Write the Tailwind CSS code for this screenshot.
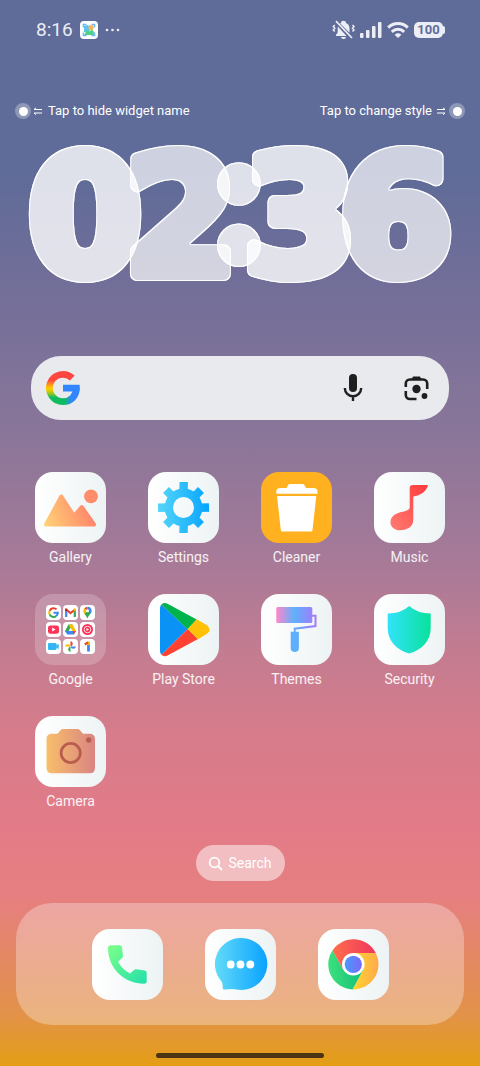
<!DOCTYPE html>
<html lang="en">
<head>
    <meta charset="UTF-8">
    <meta name="viewport" content="width=device-width, initial-scale=1.0">
    <title>Home screen</title>
    <!-- TailwindCSS -->
    <script src="https://cdn.jsdelivr.net/npm/@tailwindcss/browser@4"></script>
</head>
<body class="min-h-screen flex flex-col font-['Roboto',sans-serif] text-white bg-[linear-gradient(to_bottom,#5f6b98_0%,#5f6b98_16%,#746f99_28%,#8a7699_41%,#a87a98_53%,#c67c90_62%,#d77c8b_69%,#e27b88_77%,#e67f80_84%,#e38862_90%,#e3924b_95%,#e49e14_100%)]">

    <!-- Status bar -->
    <header class="flex items-center justify-between h-[60px] pl-9 pr-[35px] text-[#eceef6]">
        <div class="flex items-center gap-[7px]">
            <span class="text-[19px]">8:16</span>
            <svg class="size-[18px]" viewBox="0 0 18 18">
                <rect width="18" height="18" rx="4" fill="#fff"/>
                <path d="M3.500 6.500v-3h3M11.500 3.500h3v3M14.500 11.500v3h-3M6.500 14.500h-3v-3" fill="none" stroke="#6fb6f5" stroke-width="1.600"/>
                <path d="M4 5l4-1 3 3-2 4-5 0z" fill="#5cc4f2"/>
                <circle cx="11" cy="6.500" r="2.600" fill="#f6b45c"/>
                <path d="M4.500 14l2-5 3 1.500 2.500-2 2 2.500-.5 3z" fill="#4fd283"/>
            </svg>
            <svg class="w-4 h-[18px]" viewBox="0 0 16 18" fill="currentColor"><circle cx="2" cy="9" r="1.300"/><circle cx="7.500" cy="9" r="1.300"/><circle cx="13" cy="9" r="1.300"/></svg>
        </div>
        <div class="flex items-center gap-[5px]">
            <!-- Muted bell -->
            <svg class="w-[23px] h-5" viewBox="0 0 23 20" fill="currentColor">
                <path d="M8 3.300 9 3V2.500a2.500 1.800 0 0 1 5 0v.5c2.600.9 3.500 3 3.500 5.500v4.200z"/>
                <path d="M5.800 6.600 14.600 16H4v-1.200l1.500-1.700c.4-2 .1-4.500.3-6.500z"/>
                <path d="M9 17h5a2.500 2 0 0 1-5 0z"/>
                <path d="M4 1.200 20 18" stroke="currentColor" stroke-width="1.700"/>
                <path d="M2.800 5 1.300 6.500l1.500 1.800L1.300 10l1.500 1.500M20.500 5 22 6.500l-1.500 1.800L22 10l-1.500 1.500" fill="none" stroke="currentColor" stroke-width="1.500"/>
            </svg>
            <!-- Signal -->
            <svg class="w-[22px] h-4" viewBox="0 0 22 16" fill="currentColor">
                <rect x="0" y="11" width="3.500" height="5" rx="1"/><rect x="6" y="8" width="3.500" height="8" rx="1"/><rect x="12" y="4" width="3.500" height="12" rx="1"/><rect x="18" y="0" width="3.500" height="16" rx="1"/>
            </svg>
            <!-- Wi-Fi -->
            <svg class="w-[22px] h-4" viewBox="0 0 22 16" fill="none" stroke="currentColor" stroke-width="3">
                <path d="M1.200 5.600a14 14 0 0 1 19.600 0M4.800 9.800a9 9 0 0 1 12.400 0"/>
                <path d="M11 16 7.600 12.700a5.200 5.200 0 0 1 6.800 0z" fill="currentColor" stroke="none"/>
            </svg>
            <!-- Battery -->
            <div class="flex items-center">
                <span class="rounded-[5px] bg-[#eceef6] w-[29px] h-4 text-center text-[13px] leading-4 font-bold text-[#5f6b98]">100</span>
                <span class="w-0.5 h-2 rounded-r bg-[#eceef6]"></span>
            </div>
        </div>
    </header>

    <main class="flex flex-col grow">
        <!-- Widget hints -->
        <div class="flex justify-between mt-[41px] px-[15px] text-[13px] leading-5">
            <button class="flex items-center gap-[3px]">
                <span class="size-4 rounded-full bg-white/30 flex items-center justify-center"><span class="size-[9px] rounded-full bg-white"></span></span>
                <svg class="w-[9px] h-2 mr-[2px]" viewBox="0 0 9 8" fill="none" stroke="currentColor"><path d="M0 2.500h8M0 6h8M2 .8 0 2.500M2 7.700 0 6"/></svg>
                <span>Tap to hide widget name</span>
            </button>
            <button class="flex items-center gap-[3px]">
                <span>Tap to change style</span>
                <svg class="w-[9px] h-2 ml-[2px]" viewBox="0 0 9 8" fill="none" stroke="currentColor"><path d="M0 2.500h8M0 6h8M6 .8l2 1.700M6 7.700 8 6"/></svg>
                <span class="size-4 rounded-full bg-white/30 flex items-center justify-center"><span class="size-[9px] rounded-full bg-white"></span></span>
            </button>
        </div>

        <!-- Clock widget -->
        <svg class="w-full overflow-visible" viewBox="0 121 480 200" role="img" aria-label="02:36">
            <defs>
                <filter id="glass" x="-20%" y="-20%" width="140%" height="140%" color-interpolation-filters="sRGB">
                    <feMorphology in="SourceAlpha" operator="erode" radius="1" result="inner"/>
                    <feComposite in="SourceGraphic" in2="inner" operator="out" result="rim"/>
                    <feComponentTransfer in="SourceGraphic" result="body"><feFuncA type="linear" slope="0.800"/></feComponentTransfer>
                    <feMerge><feMergeNode in="body"/><feMergeNode in="rim"/></feMerge>
                </filter>
                <filter id="glassDim" x="-20%" y="-20%" width="140%" height="140%" color-interpolation-filters="sRGB">
                    <feMorphology in="SourceAlpha" operator="erode" radius="1" result="inner"/>
                    <feComposite in="SourceGraphic" in2="inner" operator="out" result="rim"/>
                    <feComponentTransfer in="SourceGraphic" result="body"><feFuncA type="linear" slope="0.700"/></feComponentTransfer>
                    <feMerge><feMergeNode in="body"/><feMergeNode in="rim"/></feMerge>
                </filter>
            </defs>
            <g font-family="DejaVu Sans, sans-serif" font-weight="700" font-size="164" text-anchor="middle" fill="#fff" stroke="#fff" stroke-width="14" stroke-linejoin="round">
                <text x="85" y="274" filter="url(#glass)">0</text>
                <text x="181" y="274" filter="url(#glassDim)">2</text>
                <text x="300" y="274" filter="url(#glass)">3</text>
                <text x="396" y="274" filter="url(#glassDim)">6</text>
                <text x="239" y="257" font-family="Inter, sans-serif" font-weight="600" stroke-width="18" filter="url(#glass)">:</text>
            </g>
        </svg>

        <!-- Google search bar -->
        <form class="flex items-center mt-[35px] mx-[31px] h-16 rounded-[30px] bg-[#e9eaee] pl-[14px] pr-[19px]">
            <svg class="size-9 shrink-0" viewBox="0 0 36 36" fill="none" stroke-width="6.800">
                <defs>
                    <linearGradient id="gLeft" x1="0" y1="0" x2="0" y2="1"><stop offset=".2" stop-color="#ff4641"/><stop offset=".5" stop-color="#ffcc00"/><stop offset=".62" stop-color="#d8cb00"/><stop offset=".85" stop-color="#0ebc5f"/></linearGradient>
                    <linearGradient id="gRight" x1="0" y1="0" x2="1" y2="0"><stop offset=".1" stop-color="#0ebc5f"/><stop offset=".65" stop-color="#3186ff"/></linearGradient>
                </defs>
                <path d="M27.300 8.100A13.600 13.600 0 1 0 18.500 31.600" stroke="url(#gLeft)"/>
                <path d="M18 31.600c8 0 13.300-5.600 13.300-13.600" stroke="url(#gRight)"/>
                <path d="M18 14.800h16.600c.3 2.300.2 4.600-.4 6.600H18z" fill="#3186ff"/>
            </svg>
            <input type="search" aria-label="Search Google" class="grow min-w-0 bg-transparent text-[#1f1f1f] outline-none">
            <button type="button" aria-label="Voice search" class="mr-10">
                <svg class="w-5 h-7" viewBox="0 0 20 28" fill="#1f1f1f">
                    <rect x="6" y="0" width="8" height="18" rx="4"/>
                    <path d="M1.800 14a8.200 8.200 0 0 0 16.400 0M10 22v5" fill="none" stroke="#1f1f1f" stroke-width="2.400"/>
                </svg>
            </button>
            <button type="button" aria-label="Search with camera">
                <svg class="w-[27px] h-[26px]" viewBox="0 0 27 26" fill="none" stroke="#1f1f1f" stroke-width="2.600">
                    <path d="M2.800 12V8.500a4 4 0 0 1 4-4h13.400a4 4 0 0 1 4 4V14M2.800 16v4a4 4 0 0 0 4 4h6.700"/>
                    <path d="M8.500 4.500 10 1.500h7l1.500 3z" fill="#1f1f1f" stroke="none"/>
                    <circle cx="13.500" cy="14" r="4.200" fill="#1f1f1f" stroke="none"/>
                    <circle cx="21.500" cy="21" r="2.900" fill="#1f1f1f" stroke="none"/>
                </svg>
            </button>
        </form>

        <!-- Apps -->
        <section class="grid grid-cols-4 gap-y-[27px] mt-[52px] px-[14px] text-sm text-white/90 text-shadow-sm">
            <button class="flex flex-col items-center gap-1">
                <svg class="size-[71px] rounded-[18px] bg-linear-to-r from-white to-[#edf3f4]" viewBox="0 0 71 71">
                    <defs><linearGradient id="gallery" gradientUnits="userSpaceOnUse" x1="9" y1="54" x2="60" y2="34"><stop stop-color="#ffd576"/><stop offset=".85" stop-color="#ff8a6b"/></linearGradient></defs>
                    <path d="M11 52.500 26.300 24.500 39 44 46.700 35 59 52.500z" fill="url(#gallery)" stroke="url(#gallery)" stroke-width="4" stroke-linejoin="round"/>
                    <circle cx="56" cy="24.300" r="6.900" fill="#ff8c6a"/>
                </svg>
                <span>Gallery</span>
            </button>
            <button class="flex flex-col items-center gap-1">
                <svg class="size-[71px] rounded-[18px] bg-linear-to-r from-white to-[#edf3f4]" viewBox="0 0 71 71">
                    <defs><linearGradient id="gear" gradientUnits="userSpaceOnUse" x1="10" y1="0" x2="61" y2="0"><stop stop-color="#55d6f8"/><stop offset="1" stop-color="#06a4ff"/></linearGradient></defs>
                    <g fill="none" stroke="url(#gear)">
                        <circle cx="35.500" cy="35.500" r="14.700" stroke-width="8.400"/>
                        <path d="M35.700 10 35.500 20M35.700 51 35.500 61M10 35.700 20 35.500M51 35.700 61 35.500M18 18l7 7M53 18l-7 7M18 53l7-7M53 53l-7-7" stroke-width="8.400"/>
                    </g>
                </svg>
                <span>Settings</span>
            </button>
            <button class="flex flex-col items-center gap-1">
                <svg class="size-[71px] rounded-[18px] bg-[#ffb120]" viewBox="0 0 71 71" fill="#fff">
                    <path d="M15.300 21.700v-2.200q0-3.500 4-3.500h6.200l1.500-2.700q.7-1.300 2-1.300h12.500q1.300 0 2 1.300l1.500 2.700h7.500q4 0 4 3.500v2.200z"/>
                    <path d="M16 24h39.300L51.500 58q-.2 1.500-1.500 1.500H21.300q-1.300 0-1.500-1.500z"/>
                </svg>
                <span>Cleaner</span>
            </button>
            <button class="flex flex-col items-center gap-1">
                <svg class="size-[71px] rounded-[18px] bg-linear-to-r from-white to-[#edf3f4]" viewBox="0 0 71 71">
                    <defs><linearGradient id="note" x1="0" y1="1" x2="1" y2="0"><stop stop-color="#ff7c73"/><stop offset="1" stop-color="#ff3b3b"/></linearGradient></defs>
                    <path d="M35.700 16q0-3 3-3H53q1.500 0 .7 1.500C50.500 21 46 23.500 39.300 24.500V48C39.300 54 33.500 58.300 26.500 58.300 20.500 58.300 16.500 55 16.500 50.500c0-5.500 4-8.500 9-10 5-1.300 8-1 10.200-4.500z" fill="url(#note)"/>
                </svg>
                <span>Music</span>
            </button>
            <button class="flex flex-col items-center gap-1">
                <span class="grid grid-cols-3 gap-[2px] size-[71px] p-[11px] rounded-[18px] bg-white/20">
                    <svg class="size-[15px] rounded bg-white" viewBox="0 0 15 15" fill="none" stroke-width="2"><path d="M10.600 4.400A4.300 4.300 0 0 0 3.600 5.800" stroke="#ea4335"/><path d="M3.600 5.800a4.300 4.300 0 0 0 0 3.600" stroke="#fbbc05"/><path d="M3.600 9.400a4.300 4.300 0 0 0 6.600 1.600" stroke="#34a853"/><path d="M10.200 11a4.300 4.300 0 0 0 1.600-3.300H7.500" stroke="#4285f4"/></svg>
                    <svg class="size-[15px] rounded bg-white" viewBox="0 0 15 15" fill="none" stroke-width="2.200"><path d="M3.200 12V5" stroke="#4285f4"/><path d="M11.800 12V5" stroke="#34a853"/><path d="M3 4.500l4.500 3.700L12 4.500" stroke="#ea4335"/><path d="M11.800 6V3.600" stroke="#fbbc05"/><path d="M3.200 6V3.600" stroke="#c5221f"/></svg>
                    <svg class="size-[15px] rounded bg-white" viewBox="0 0 15 15"><path d="M7.500 13.500C6.800 10.500 3.500 9 3.500 5.800h4z" fill="#34a853"/><path d="M7.500 13.500c.7-3 4-4.500 4-7.700l-1.500-2L5 9.500c1.200 1.200 2 2 2.500 4z" fill="#34a853"/><path d="M3.500 5.800A4 4 0 0 1 5 2.700l2.500 3L4.600 9Q3.500 7.500 3.500 5.800z" fill="#fbbc05"/><path d="M4.500 3.300A4 4 0 0 1 7.500 1.800v4z" fill="#ea4335"/><path d="M7.500 1.800a4 4 0 0 1 4 4q0 1.400-1 2.800l-3-2.800z" fill="#4285f4"/><circle cx="7.500" cy="5.800" r="1.500" fill="#fff"/></svg>
                    <svg class="size-[15px] rounded bg-white" viewBox="0 0 15 15"><rect x="2" y="3.500" width="11" height="8.300" rx="2.300" fill="#ff3358"/><path d="M6.200 5.600v4l3.400-2z" fill="#fff"/></svg>
                    <svg class="size-[15px] rounded bg-white" viewBox="0 0 15 15"><path d="M5.500 2.500h4L7.500 6 4.500 12 2 9z" fill="#34a853"/><path d="M5.500 2.500h4L13 9H9z" fill="#fbbc05"/><path d="M2 9l2.300 3.500h6.500L13 9z" fill="#4285f4"/><path d="M10 9h3l-2.200 3.500z" fill="#ea4335"/><path d="M7.500 6 5.700 9h3.600z" fill="#fff"/></svg>
                    <svg class="size-[15px] rounded bg-white" viewBox="0 0 15 15"><circle cx="7.500" cy="7.500" r="5.500" fill="#ff3358"/><circle cx="7.500" cy="7.500" r="3.300" fill="none" stroke="#fff" stroke-width=".8"/><path d="M6.500 6v3l2.500-1.500z" fill="#fff"/></svg>
                    <svg class="size-[15px] rounded bg-white" viewBox="0 0 15 15" fill="#34b6f6"><rect x="2" y="4" width="8.500" height="7" rx="1.300"/><path d="M10 6.800 12.700 4.800v5.500L10 8.300z"/></svg>
                    <svg class="size-[15px] rounded bg-white" viewBox="0 0 15 15"><path d="M7.500 7.500V2a2.800 2.800 0 0 1 0 5.500z" fill="#ea4335"/><path d="M7.500 7.500H13a2.800 2.800 0 0 1-5.500 0z" fill="#4285f4"/><path d="M7.500 7.500V13a2.800 2.800 0 0 1 0-5.500z" fill="#34a853"/><path d="M7.500 7.500H2a2.800 2.800 0 0 1 5.500 0z" fill="#fbbc05"/></svg>
                    <svg class="size-[15px] rounded bg-white" viewBox="0 0 15 15" fill="none" stroke-width="2.800"><path d="M8.500 6v6.500" stroke="#4285f4"/><path d="M8.500 6V2.500" stroke="#fbbc05"/><path d="M4.800 5.500 8 3.300" stroke="#ea4335" stroke-width="2.200"/></svg>
                </span>
                <span>Google</span>
            </button>
            <button class="flex flex-col items-center gap-1">
                <svg class="size-[71px] rounded-[18px] bg-linear-to-r from-white to-[#edf3f4]" viewBox="0 0 71 71">
                    <path d="M13.500 10.500 39.700 35 13.500 60.800Q12 59.500 12 57V14q0-2.500 1.500-3.500z" fill="#0a93f5"/>
                    <path d="M13.500 10.500q2.500-2.500 6-.8L48.700 25.500 39.700 35.200z" fill="#00b34a"/>
                    <path d="M13.500 60.800q2.500 2.500 6 .7L50 45 39.700 35z" fill="#ff4131"/>
                    <path d="M48.700 25.300 59 31.200q5 4.300 0 8.600L50 45.200 39.700 35z" fill="#ffc107"/>
                </svg>
                <span>Play Store</span>
            </button>
            <button class="flex flex-col items-center gap-1">
                <svg class="size-[71px] rounded-[18px] bg-linear-to-r from-white to-[#edf3f4]" viewBox="0 0 71 71">
                    <defs>
                        <linearGradient id="roller"><stop stop-color="#ff86cc"/><stop offset=".5" stop-color="#5fb0fb"/><stop offset="1" stop-color="#9a82fb"/></linearGradient>
                        <linearGradient id="arm" gradientUnits="userSpaceOnUse" x1="33" y1="0" x2="55" y2="0"><stop stop-color="#5fb0fb"/><stop offset="1" stop-color="#a877fb"/></linearGradient>
                    </defs>
                    <rect x="15.300" y="13" width="36" height="16" rx="1.500" fill="url(#roller)"/>
                    <path d="M51 21.700h3.500V32L33.700 34.700V39" fill="none" stroke="url(#arm)" stroke-width="2"/>
                    <path d="M29.700 37.700h8.200V54a4.100 4.100 0 0 1-8.200 0z" fill="#5fb0fb"/>
                </svg>
                <span>Themes</span>
            </button>
            <button class="flex flex-col items-center gap-1">
                <svg class="size-[71px] rounded-[18px] bg-linear-to-r from-white to-[#edf3f4]" viewBox="0 0 71 71">
                    <defs><linearGradient id="shield"><stop stop-color="#33e2fb"/><stop offset="1" stop-color="#08e29b"/></linearGradient></defs>
                    <path d="M35.200 12Q43.500 19.500 56.700 19.500V34C56.700 47 48 56 35.200 59.500 22.500 56 13.700 47 13.700 34V19.500Q27 19.500 35.200 12z" fill="url(#shield)"/>
                </svg>
                <span>Security</span>
            </button>
            <button class="flex flex-col items-center gap-1">
                <svg class="size-[71px] rounded-[18px] bg-linear-to-r from-white to-[#edf3f4]" viewBox="0 0 71 71">
                    <defs><linearGradient id="camera"><stop stop-color="#f8bf6b"/><stop offset="1" stop-color="#da8482"/></linearGradient></defs>
                    <path d="M17 17.700h5.500l3-3.500Q26.500 13 28 13h14.500q1.500 0 2.500 1.200l3 3.500h6.500q5.500 0 5.500 5.500v28.500q0 5.500-5.500 5.500H17q-5.500 0-5.500-5.500V23.200q0-5.500 5.500-5.500z" fill="url(#camera)"/>
                    <circle cx="35.700" cy="37" r="9.600" fill="none" stroke="#b95d4e" stroke-width="2.800"/>
                    <circle cx="53.700" cy="24" r="2.700" fill="#b95d4e"/>
                </svg>
                <span>Camera</span>
            </button>
        </section>

        <button class="flex items-center justify-center gap-[5px] self-center mt-[34px] h-9 w-[89px] rounded-full bg-white/50 text-sm">
            <svg class="size-[15px]" viewBox="0 0 15 15" fill="none" stroke="currentColor" stroke-width="1.800" stroke-linecap="round"><circle cx="6.500" cy="6.500" r="4.800"/><path d="M10.200 10.200 13.500 13.500"/></svg>
            Search
        </button>

        <!-- Dock -->
        <nav class="flex items-center justify-center gap-[42px] mt-[22px] mx-4 h-[122px] rounded-[36px] bg-white/30">
            <button aria-label="Phone">
                <svg class="size-[71px] rounded-[18px] bg-linear-to-r from-white to-[#edf3f4]" viewBox="0 0 71 71">
                    <defs><linearGradient id="phone" x1="0" y1="0" x2="1" y2="1"><stop stop-color="#7dff88"/><stop offset="1" stop-color="#22e0ab"/></linearGradient></defs>
                    <path d="M16 19q0-2.700 2.700-2.700h9q2 0 2.300 2l1 8.500q.1 1.200-.8 2L26 33q4.500 7.500 12 11.600l4-3.600q1-.9 2.200-.7l8.500 1.100q2 .3 2 2.300V52q0 2.700-2.700 2.700C33 54.700 16 40 16 19z" fill="url(#phone)"/>
                </svg>
            </button>
            <button aria-label="Messages">
                <svg class="size-[71px] rounded-[18px] bg-linear-to-r from-white to-[#edf3f4]" viewBox="0 0 71 71">
                    <defs><linearGradient id="chat"><stop stop-color="#62dbf8"/><stop offset="1" stop-color="#0aa2ff"/></linearGradient></defs>
                    <path d="M35.500 9A26 26 0 1 1 30 60.200Q26 59.500 20 60.500q-2.300.5-2.300-1.800c0-3 0-5-1.700-7A26 26 0 0 1 35.500 9z" fill="url(#chat)"/>
                    <g fill="#fff"><circle cx="25.700" cy="35.500" r="3.900"/><circle cx="35.500" cy="35.500" r="3.900"/><circle cx="45.300" cy="35.500" r="3.900"/></g>
                </svg>
            </button>
            <button aria-label="Chrome">
                <svg class="size-[71px] rounded-[18px] bg-linear-to-r from-white to-[#edf3f4]" viewBox="0 0 71 71">
                    <defs>
                        <linearGradient id="cRed"><stop stop-color="#ff6e4a"/><stop offset="1" stop-color="#f0365e"/></linearGradient>
                        <linearGradient id="cGreen"><stop stop-color="#3de07c"/><stop offset="1" stop-color="#12c07a"/></linearGradient>
                        <linearGradient id="cYellow"><stop stop-color="#ffd62e"/><stop offset="1" stop-color="#ffa94c"/></linearGradient>
                        <linearGradient id="cBlue"><stop stop-color="#4a9af8"/><stop offset="1" stop-color="#7a68fb"/></linearGradient>
                    </defs>
                    <path d="M35.300 24H57.700A25 25 0 0 1 34.500 60.400L45 41z" fill="url(#cYellow)"/>
                    <path d="M14.500 21.500A25 25 0 0 0 34.500 60.400L45 41 25.500 41z" fill="url(#cGreen)"/>
                    <path d="M14.500 21.500A25 25 0 0 1 57.700 24H35.300L25.500 41z" fill="url(#cRed)"/>
                    <circle cx="35.300" cy="35.300" r="11.300" fill="#fff"/>
                    <circle cx="35.300" cy="35.300" r="8.600" fill="url(#cBlue)"/>
                </svg>
            </button>
        </nav>
    </main>

    <!-- Gesture bar -->
    <footer class="flex justify-center pt-[27px] pb-2">
        <div class="w-[168px] h-[5px] rounded-full bg-[#4b3413]"></div>
    </footer>
</body>
</html>
